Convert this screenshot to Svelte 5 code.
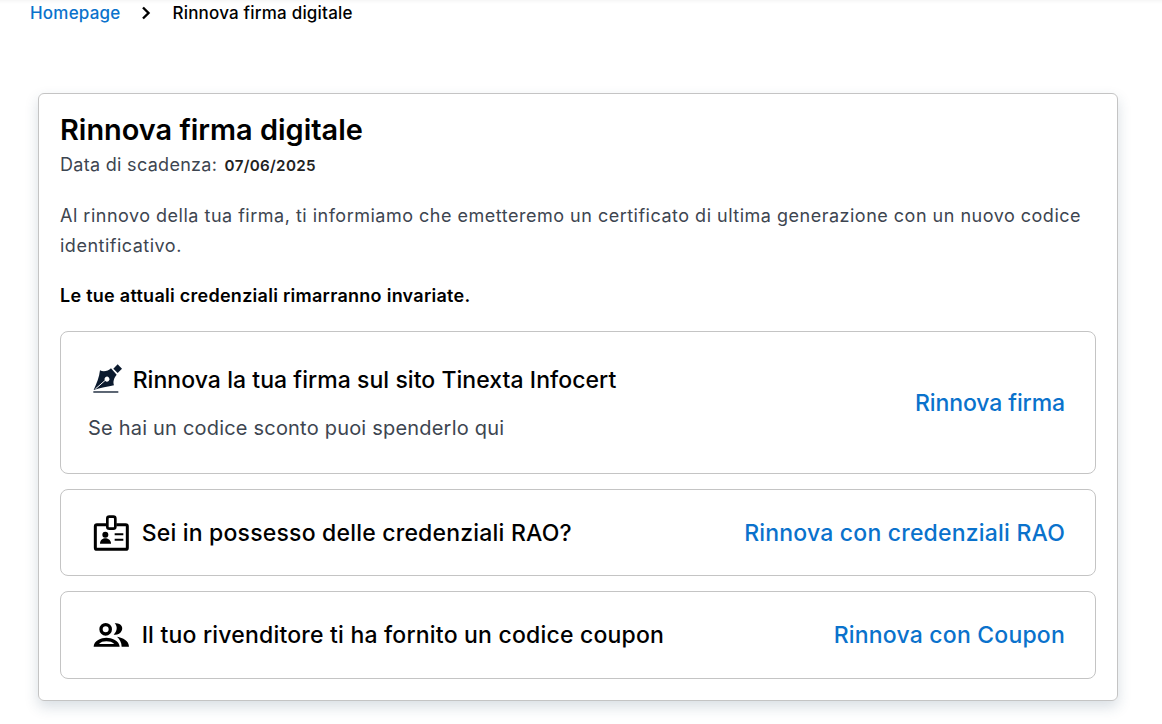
<script>
  const options = [
    { title: 'Sei in possesso delle credenziali RAO?', action: 'Rinnova con credenziali RAO', icon: 'badge' },
    { title: 'Il tuo rivenditore ti ha fornito un codice coupon', action: 'Rinnova con Coupon', icon: 'people' }
  ];
</script>

<div class="page">
  <nav class="crumbs">
    <a href="#home">Homepage</a>
    <svg class="chev" viewBox="0 0 12 14" width="12" height="14"><path d="M3 1.500 8.500 7 3 12.500" fill="none" stroke="#000" stroke-width="2.400"/></svg>
    <span>Rinnova firma digitale</span>
  </nav>

  <main class="card">
    <h1>Rinnova firma digitale</h1>
    <p class="expiry">Data di scadenza: <b>07/06/2025</b></p>
    <p class="intro">Al rinnovo della tua firma, ti informiamo che emetteremo un certificato di ultima generazione con un nuovo codice identificativo.</p>
    <p class="strong">Le tue attuali credenziali rimarranno invariate.</p>

    <section class="option first">
      <div class="stack">
        <div class="head">
          <svg class="pen" viewBox="96 68 92 92" width="30.670" height="30.670">
            <path d="M173 72 186 85 173 98 160 85z" fill="#0b1a2e"/>
            <path fill-rule="evenodd" fill="#0b1a2e" d="M120 90C130 96 145 92 153 84L170 103C162 112 158 125 162 135 145 139 120 143 101 149 110 130 118 110 120 90ZM136 111A7 7 0 1 0 146 122 7 7 0 1 0 136 111Z"/>
            <path d="M106 146 138 118" stroke="#fff" stroke-width="3"/>
            <path d="M100 155H175" stroke="#0b1a2e" stroke-width="4"/>
          </svg>
          <h2 class="tight">Rinnova la tua firma sul sito Tinexta Infocert</h2>
        </div>
        <p class="hint">Se hai un codice sconto puoi spenderlo qui</p>
      </div>
      <a class="short" href="#renew">Rinnova firma</a>
    </section>

    {#each options as o}
      <section class="option">
        <div class="head wide">
          {#if o.icon === 'badge'}
            <svg viewBox="100 72 110 114" width="36.670" height="38">
              <path d="M140 104H112Q107 104 107 109V173Q107 178 112 178H198Q203 178 203 173V109Q203 104 198 104H170" fill="none" stroke="#000" stroke-width="9"/>
              <rect x="143" y="80" width="24" height="36" rx="6" fill="none" stroke="#000" stroke-width="8"/>
              <circle cx="137" cy="134" r="9"/>
              <path d="M121 161C121 150 130 145 137 145S154 150 154 161z"/>
              <path d="M165 133H191M165 149H191" stroke="#000" stroke-width="6"/>
            </svg>
          {:else}
            <svg viewBox="100 396 110 76" width="36.670" height="25.330">
              <circle cx="138" cy="418" r="14" fill="none" stroke="#000" stroke-width="10"/>
              <path d="M165 400C185 398 190 412 187 420 183 432 170 436 162 434 172 425 175 410 165 400Z"/>
              <path fill-rule="evenodd" d="M102 470C102 452 125 443 140 443S180 452 180 470ZM118 462H164C158 456 150 454 140 454S124 456 118 462Z"/>
              <path d="M172 440C190 443 208 452 208 470H186C186 458 180 447 172 440Z"/>
            </svg>
          {/if}
          <h2>{o.title}</h2>
        </div>
        <a href="#renew">{o.action}</a>
      </section>
    {/each}
  </main>
</div>

<style>
  :global(body) {
    margin: 0;
    background: #fff;
    font-family: Inter, "Liberation Sans", sans-serif;
    color: #000;
  }
  .page {
    height: 724px;
    box-sizing: border-box;
    overflow: hidden;
    padding-left: 30px;
    box-shadow: inset 0 5px 5px -5px rgba(0, 0, 0, .08);
  }
  .crumbs {
    display: flex;
    align-items: center;
    height: 25px;
    font-size: 17px;
    letter-spacing: .2px;
    font-weight: 500;
  }
  .crumbs a { color: #0a72cc; text-decoration: none; }
  .chev { margin: 0 20px 0 20px; }
  .card {
    box-sizing: border-box;
    width: 1080px;
    height: 608px;
    margin: 68px 0 0 8px;
    padding: 19px 21px;
    border: 1px solid #c4c4c4;
    border-radius: 6px;
    box-shadow: 0 6px 14px rgba(40, 70, 100, .18);
  }
  h1 {
    margin: 0;
    font-size: 28.900px;
    line-height: 34px;
    font-weight: 600;
  }
  p { margin: 0; }
  .expiry {
    margin-top: 6px;
    font-size: 18px;
    letter-spacing: .3px;
    line-height: 24px;
    color: #3d4550;
  }
  .expiry b { font-size: 15.200px; font-weight: 600; color: #222; margin-left: 2px; }
  .intro {
    margin-top: 23px;
    font-size: 18px;
    letter-spacing: .5px;
    line-height: 30px;
    color: #3d4550;
  }
  .strong {
    margin-top: 23px;
    font-size: 18px;
    letter-spacing: .27px;
    line-height: 24px;
    font-weight: 600;
  }
  .option {
    display: flex;
    align-items: center;
    justify-content: space-between;
    box-sizing: border-box;
    height: 87px;
    margin-top: 15px;
    padding: 0 30px 0 32px;
    border: 1px solid #c4c4c4;
    border-radius: 8px;
  }
  .option:last-child { height: 88px; }
  .option.first { height: 143px; margin-top: 23px; padding-left: 27px; }
  .stack { padding-top: 2px; }
  .head { display: flex; align-items: center; gap: 10px; }
  .head.wide { gap: 12px; }
  .pen { margin: -4px 0 0 4px; }
  h2 {
    margin: 0;
    font-size: 23px;
    letter-spacing: .2px;
    line-height: 30px;
    font-weight: 500;
  }
  h2.tight { letter-spacing: .05px; }
  .hint {
    margin-top: 19px;
    font-size: 20px;
    letter-spacing: .2px;
    line-height: 28px;
    color: #3d4550;
  }
  .option a {
    color: #0a72cc;
    font-size: 23px;
    letter-spacing: .2px;
    font-weight: 500;
    text-decoration: none;
    white-space: nowrap;
  }
  .option a.short { letter-spacing: -.1px; }
</style>
